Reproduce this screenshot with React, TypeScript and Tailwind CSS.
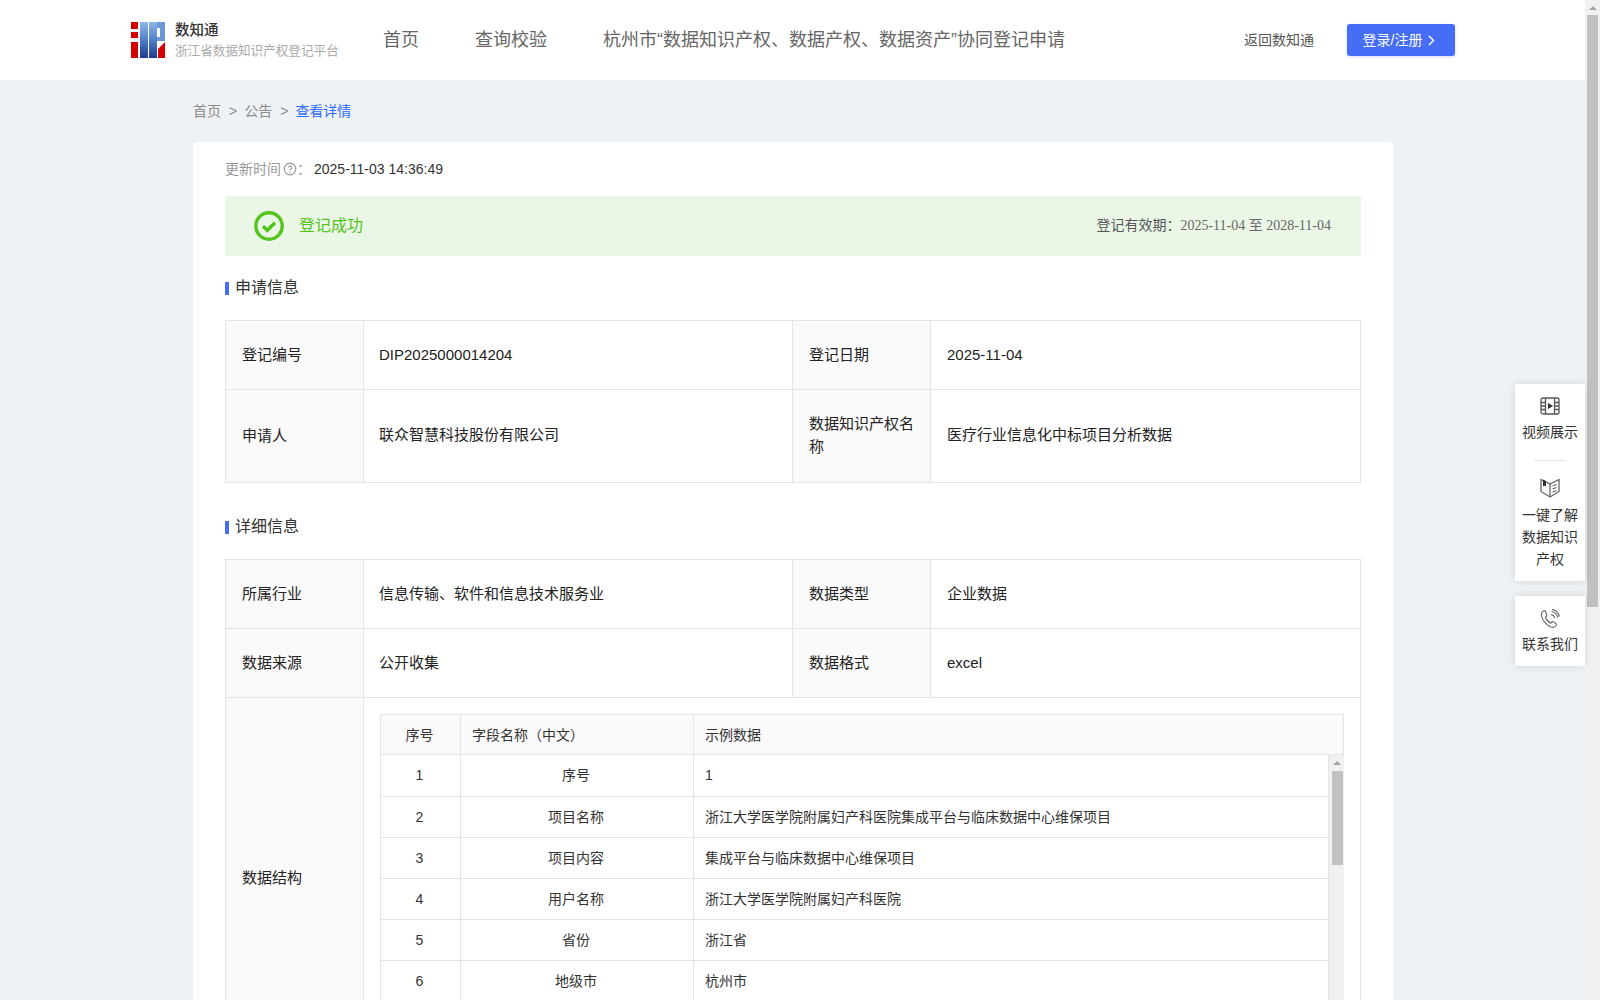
import React from "react";

const font = "font-['Liberation_Sans','Noto_Sans_CJK_SC',sans-serif]";

const structureRows = [
  { no: "1", name: "序号", sample: "1" },
  { no: "2", name: "项目名称", sample: "浙江大学医学院附属妇产科医院集成平台与临床数据中心维保项目" },
  { no: "3", name: "项目内容", sample: "集成平台与临床数据中心维保项目" },
  { no: "4", name: "用户名称", sample: "浙江大学医学院附属妇产科医院" },
  { no: "5", name: "省份", sample: "浙江省" },
  { no: "6", name: "地级市", sample: "杭州市" },
];

function Logo() {
  return (
    <svg width="34" height="36" viewBox="0 0 34 36" className="shrink-0">
      <defs>
        <linearGradient id="logoBlue" x1="0" y1="0" x2="0" y2="1">
          <stop offset="0" stopColor="#8fb8e8" />
          <stop offset="0.5" stopColor="#4f7fc6" />
          <stop offset="1" stopColor="#1f3a8c" />
        </linearGradient>
      </defs>
      <rect x="0" y="0" width="7" height="7" fill="#d40000" />
      <rect x="0" y="10" width="7" height="6" fill="#d40000" />
      <rect x="0" y="20" width="7" height="16" fill="#d40000" />
      <rect x="9" y="0" width="8" height="36" fill="url(#logoBlue)" />
      <rect x="18" y="0" width="8" height="36" fill="url(#logoBlue)" />
      <path d="M26 0h8v19l-5 0h-3v-4h3V6h-3z" fill="#6a98d8" />
      <path d="M34 36h-7v-9l7-7z" fill="#d40000" />
    </svg>
  );
}

function SectionTitle({ title, className }: { title: string; className?: string }) {
  return (
    <div className={`flex items-center h-6 ${className}`}>
      <span className="w-1 h-[13px] mt-0.5 bg-[#466df5]" />
      <span className="ml-[6px] mt-px text-base text-[#333]">{title}</span>
    </div>
  );
}

function Label({ children, className = "" }: { children: React.ReactNode; className?: string }) {
  return (
    <td className={`border border-[#e4e4e4] bg-[#fafafa] px-4 pb-0.5 leading-[23px] text-[#222] ${className}`}>{children}</td>
  );
}

function Value({ children, colSpan, className = "" }: { children: React.ReactNode; colSpan?: number; className?: string }) {
  return (
    <td colSpan={colSpan} className={`border border-[#e4e4e4] px-4 text-[#222] ${className}`}>
      {children}
    </td>
  );
}

function InfoCols() {
  return (
    <colgroup>
      <col className="w-[138px]" />
      <col className="w-[429px]" />
      <col className="w-[138px]" />
      <col />
    </colgroup>
  );
}

function StructureTable() {
  return (
    <div className="w-[964px] h-[329px] overflow-hidden text-sm text-[#333]">
      <table className="w-full table-fixed border-collapse">
        <colgroup>
          <col className="w-[80px]" />
          <col className="w-[233px]" />
          <col />
        </colgroup>
        <thead>
          <tr className="h-[40px] bg-[#fafafa]">
            <th className="border border-[#e4e4e4] pr-0.5 font-normal">序号</th>
            <th className="border border-[#e4e4e4] pl-[11px] text-left font-normal">字段名称（中文）</th>
            <th className="border border-[#e4e4e4] pl-[11px] text-left font-normal">示例数据</th>
          </tr>
        </thead>
      </table>
      <div className="flex items-start">
        <table className="w-[949px] table-fixed border-collapse">
          <colgroup>
            <col className="w-[80px]" />
            <col className="w-[233px]" />
            <col />
          </colgroup>
          <tbody>
            {structureRows.map((row) => (
              <tr key={row.no} className="h-[41px]">
                <td className="border border-t-0 border-[#e4e4e4] pr-0.5 text-center">{row.no}</td>
                <td className="border border-t-0 border-[#e4e4e4] pr-0.5 text-center">{row.name}</td>
                <td className="border border-t-0 border-[#e4e4e4] pl-[11px]">{row.sample}</td>
              </tr>
            ))}
          </tbody>
        </table>
        <Scrollbar className="w-[15px] h-[288px]" thumb="h-[94px] mt-[1px] mx-[3px] w-[11px]" />
      </div>
    </div>
  );
}

function Scrollbar({ className, thumb }: { className: string; thumb: string }) {
  return (
    <div className={`shrink-0 bg-[#f1f1f1] ${className}`}>
      <div className="flex h-[15px] items-center justify-center">
        <span className="h-0 w-0 border-x-[4px] border-b-[4px] border-x-transparent border-b-[#a3a3a3]" />
      </div>
      <div className={`bg-[#c1c1c1] ${thumb}`} />
    </div>
  );
}

function FloatItem({ icon, lines, textClass }: { icon: React.ReactNode; lines: string[]; textClass: string }) {
  return (
    <div className="flex flex-col items-center">
      {icon}
      <div className={`text-center text-sm leading-[22px] text-[#333] ${textClass}`}>
        {lines.map((line) => (
          <div key={line}>{line}</div>
        ))}
      </div>
    </div>
  );
}

function FloatPanel() {
  return (
    <div className="absolute left-[1515px] top-[384px] w-[70px]">
      <div className="bg-white pt-[13px] pb-[11px] shadow-[0_0_8px_rgba(0,0,0,0.12)]">
        <FloatItem
          lines={["视频展示"]}
          textClass="mt-[6px]"
          icon={
            <svg width="20" height="18" viewBox="0 0 20 18" fill="none" stroke="#555" strokeWidth="1.3">
              <rect x="1" y="1" width="18" height="16" rx="2" />
              <path d="M5.500 1v16M14.500 1v16M1 5.500h4.500M1 9h4.500M1 12.500h4.500M14.500 5.500H19M14.500 9H19M14.500 12.500H19" />
              <path d="M8 6l5 3-5 3z" fill="#333" stroke="none" />
            </svg>
          }
        />
        <div className="mx-auto mt-[17px] mb-[17px] h-px w-8 bg-[#e4e4e4]" />
        <FloatItem
          lines={["一键了解", "数据知识", "产权"]}
          textClass="mt-[6px]"
          icon={
            <svg width="20" height="20" viewBox="0 0 20 20" fill="none" stroke="#666" strokeWidth="1.3">
              <path d="M1 1.500l9 4.500 9-4.500V13.500l-9 5.500-9-5.500z" />
              <path d="M10 6v13" />
              <path d="M3 1.500l3 1.500v5.500L4.500 7.500 3 8.500z" fill="#333" stroke="none" />
              <path d="M12.500 8l4-1.500M12.500 11l4-1.500M12.500 14l4-1.500" />
            </svg>
          }
        />
      </div>
      <div className="mt-[15px] bg-white pt-[13px] pb-[11px] shadow-[0_0_8px_rgba(0,0,0,0.12)]">
        <FloatItem
          lines={["联系我们"]}
          textClass="mt-[4px]"
          icon={
            <svg width="20" height="20" viewBox="0 0 20 20" fill="none" stroke="#666" strokeWidth="1.1">
              <path d="M4 1.800C2 2.800 1 4.500 1.500 7c.8 4 5 9.500 9.500 11 2.300.7 4.300 0 5.300-1.500.5-.8.300-1.500-.4-2l-2.400-1.600c-.7-.4-1.300-.3-1.800.3l-.8 1c-2.300-1-4.700-3.700-5.500-6l1-.9c.6-.5.700-1.100.3-1.800L5.400 2.300C5 1.700 4.600 1.500 4 1.800z" />
              <path d="M11 5.500c2 .3 3.300 1.700 3.600 3.600M11.500 2.500c3.400.4 5.700 2.800 6.100 6.100M12 .5c3.800.5 6.800 3.500 7.300 7.300" />
            </svg>
          }
        />
      </div>
    </div>
  );
}

export default function App() {
  return (
    <div className={`relative flex h-screen overflow-hidden bg-[#eef2f5] ${font}`}>
      <div className="h-full w-[1585px] shrink-0 overflow-hidden">
        <header className="flex h-20 items-center bg-white pl-[131px]">
          <Logo />
          <div className="ml-[10px] w-[200px] shrink-0">
            <div className="text-[14.500px] font-medium leading-5 text-[#333]">数知通</div>
            <div className="mt-px whitespace-nowrap text-[12.6px] leading-5 text-[#aaa]">浙江省数据知识产权登记平台</div>
          </div>
          <nav className="ml-2 flex gap-[56px] whitespace-nowrap text-lg text-[#666]">
            <span>首页</span>
            <span>查询校验</span>
            <span>杭州市“数据知识产权、数据产权、数据资产”协同登记申请</span>
          </nav>
          <span className="ml-[179px] whitespace-nowrap text-sm text-[#555]">返回数知通</span>
          <button className="ml-[33px] flex h-8 w-[108px] items-center justify-center gap-1.5 rounded-[3px] bg-[#466df5] pr-1 text-sm text-white shadow-[0_1px_3px_rgba(70,109,245,0.25)]">
            登录/注册
            <svg width="7" height="11" viewBox="0 0 7 11" fill="none" stroke="currentColor" strokeWidth="1.4">
              <path d="M1 1l4.500 4.500L1 10" />
            </svg>
          </button>
        </header>

        <main className="ml-[193px] w-[1200px]">
          <div className="flex h-[62px] items-center gap-2 pb-px text-sm text-[#8c8c8c]">
            <span>首页</span>
            <span className="-mr-px">&gt;</span>
            <span>公告</span>
            <span className="-mr-px">&gt;</span>
            <span className="text-[#2f6bff]">查看详情</span>
          </div>

          <div className="rounded-t-[4px] bg-white px-8 pt-[16px] pb-10 text-[15px]">
            <div className="flex h-[22px] items-center text-sm">
              <span className="text-[#999]">更新时间</span>
              <svg width="14" height="14" viewBox="0 0 14 14" fill="none" className="ml-[2px]">
                <circle cx="7" cy="7" r="5.800" stroke="#999" strokeWidth="1.200" />
                <path d="M5.300 5.600a1.700 1.700 0 1 1 2.500 1.500c-.6.300-.8.600-.8 1.200" stroke="#999" strokeWidth="1.100" />
                <circle cx="7" cy="10.200" r=".7" fill="#999" />
              </svg>
              <span className="text-[#999]">：</span>
              <span className="ml-[3px] text-[#333]">2025-11-03 14:36:49</span>
            </div>

            <div className="mt-[16px] flex h-[60px] items-center justify-between bg-[#ebf7e6] pl-[29px] pr-[30px]">
              <div className="flex items-center">
                <svg width="30" height="30" viewBox="0 0 30 30" fill="none">
                  <circle cx="15" cy="15" r="13.200" stroke="#52c41a" strokeWidth="3.400" />
                  <path d="M9 15.300l4.300 4 7.700-7.500" stroke="#52c41a" strokeWidth="3.400" />
                </svg>
                <span className="ml-[15px] text-base text-[#52c41a]">登记成功</span>
              </div>
              <div className="pb-0.5 text-sm text-[#555]">
                登记有效期：<span className="font-['Liberation_Serif','Noto_Sans_CJK_SC',serif] text-[#666]">2025-11-04 至 2028-11-04</span>
              </div>
            </div>

            <SectionTitle title="申请信息" className="mt-[19px]" />
            <table className="mt-[21px] w-full table-fixed border-collapse">
              <InfoCols />
              <tbody>
                <tr className="h-[69px]">
                  <Label>登记编号</Label>
                  <Value className="pl-[15px]">DIP2025000014204</Value>
                  <Label>登记日期</Label>
                  <Value>2025-11-04</Value>
                </tr>
                <tr className="h-[93px]">
                  <Label>申请人</Label>
                  <Value className="pb-px pl-[15px]">联众智慧科技股份有限公司</Value>
                  <Label>数据知识产权名称</Label>
                  <Value className="pb-px">医疗行业信息化中标项目分析数据</Value>
                </tr>
              </tbody>
            </table>

            <SectionTitle title="详细信息" className="mt-[31px]" />
            <table className="mt-[21px] w-full table-fixed border-collapse">
              <InfoCols />
              <tbody>
                <tr className="h-[69px]">
                  <Label>所属行业</Label>
                  <Value className="pl-[15px]">信息传输、软件和信息技术服务业</Value>
                  <Label>数据类型</Label>
                  <Value>企业数据</Value>
                </tr>
                <tr className="h-[69px]">
                  <Label>数据来源</Label>
                  <Value className="pl-[15px]">公开收集</Value>
                  <Label>数据格式</Label>
                  <Value>excel</Value>
                </tr>
                <tr>
                  <Label>数据结构</Label>
                  <td colSpan={3} className="border border-[#e4e4e4] p-4">
                    <StructureTable />
                  </td>
                </tr>
              </tbody>
            </table>
          </div>
        </main>
      </div>

      <Scrollbar className="w-[15px] h-full" thumb="h-[592px] mx-[2px] w-[11px]" />
      <FloatPanel />
    </div>
  );
}
